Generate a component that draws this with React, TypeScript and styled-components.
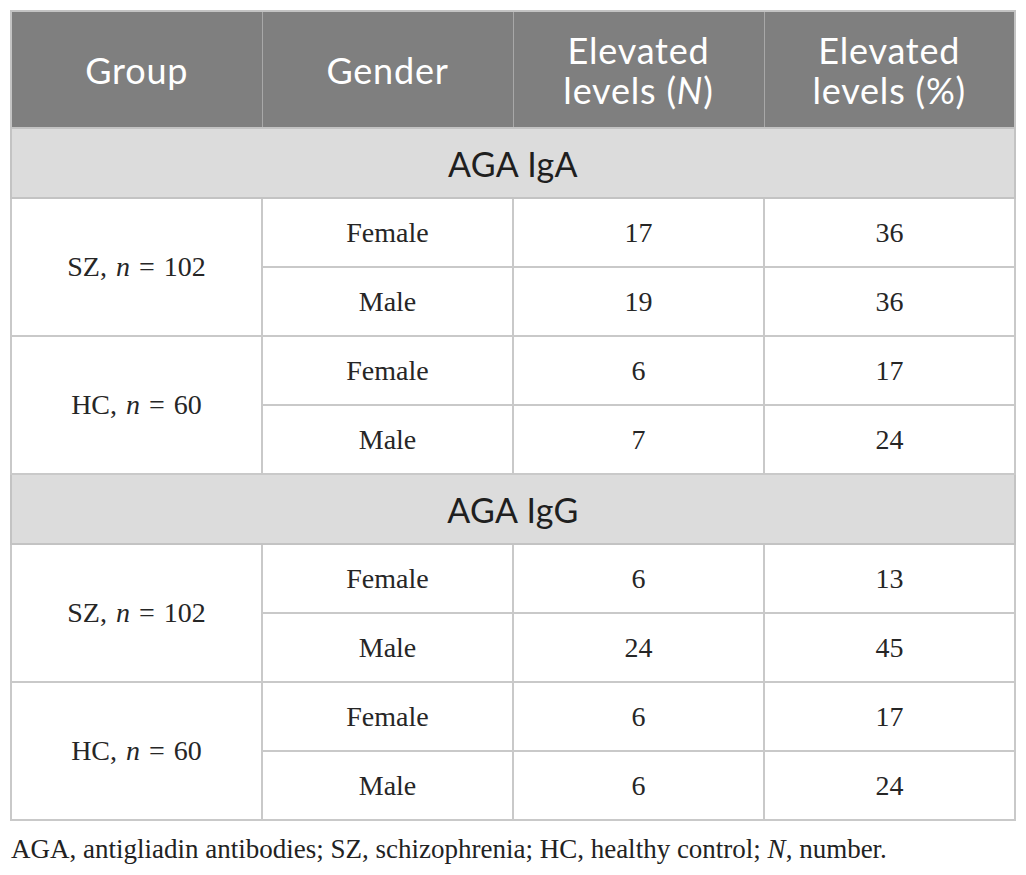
import styled, { createGlobalStyle } from 'styled-components';

const GlobalStyle = createGlobalStyle`
	html, body {
		margin: 0;
		padding: 0;
		background: #ffffff;
	}
`;

const Page = styled.div`
	padding: 10px 10px 0 10px;
	width: 1006px;
`;

const Table = styled.table`
	width: 1006px;
	border-collapse: collapse;
	table-layout: fixed;
	border: 2px solid #c3c3c3;
`;

const HeadCell = styled.th`
	height: 115px;
	padding: 0 4px;
	background: #7f7f7f;
	color: #ffffff;
	font-family: Lato, 'Open Sans', sans-serif;
	font-weight: 400;
	font-size: 36px;
	letter-spacing: 0.8px;
	line-height: 40px;
	text-align: center;
	vertical-align: middle;
	border-left: 1px solid #a8a8a8;
	&:first-child {
		border-left: none;
	}
`;

const SectionCell = styled.td`
	height: 66px;
	background: #dcdcdc;
	color: #1f1f1f;
	font-family: Lato, 'Open Sans', sans-serif;
	font-size: 34px;
	letter-spacing: 0.4px;
	text-align: center;
	vertical-align: middle;
	border-top: 2px solid #c3c3c3;
	border-bottom: 2px solid #c3c3c3;
`;

const Cell = styled.td`
	height: 67px;
	padding: 0;
	color: #262626;
	font-family: 'Liberation Serif', 'Times New Roman', serif;
	font-size: 28px;
	word-spacing: 2px;
	text-align: center;
	vertical-align: middle;
	border: 2px solid #c9c9c9;
`;

const Note = styled.p`
	margin: 13px 0 0 1px;
	color: #222222;
	font-family: 'Liberation Serif', 'Times New Roman', serif;
	font-size: 27px;
	white-space: nowrap;
`;

type Row = { group: string; n: string; rows: [string, string, string][] };

const sections: { title: string; groups: Row[] }[] = [
	{
		title: 'AGA IgA',
		groups: [
			{ group: 'SZ', n: '102', rows: [['Female', '17', '36'], ['Male', '19', '36']] },
			{ group: 'HC', n: '60', rows: [['Female', '6', '17'], ['Male', '7', '24']] },
		],
	},
	{
		title: 'AGA IgG',
		groups: [
			{ group: 'SZ', n: '102', rows: [['Female', '6', '13'], ['Male', '24', '45']] },
			{ group: 'HC', n: '60', rows: [['Female', '6', '17'], ['Male', '6', '24']] },
		],
	},
];

export default function App() {
	return (
		<Page>
			<GlobalStyle />
			<Table>
				<thead>
					<tr>
						<HeadCell>Group</HeadCell>
						<HeadCell>Gender</HeadCell>
						<HeadCell>
							Elevated
							<br />
							levels (<i>N</i>)
						</HeadCell>
						<HeadCell>
							Elevated
							<br />
							levels (%)
						</HeadCell>
					</tr>
				</thead>
				<tbody>
					{sections.map((s) => [
						<tr key={s.title}>
							<SectionCell colSpan={4}>{s.title}</SectionCell>
						</tr>,
						...s.groups.flatMap((g) =>
							g.rows.map((r, i) => (
								<tr key={s.title + g.group + r[0]}>
									{i === 0 && (
										<Cell rowSpan={2}>
											{g.group}, <i>n</i> = {g.n}
										</Cell>
									)}
									<Cell>{r[0]}</Cell>
									<Cell>{r[1]}</Cell>
									<Cell>{r[2]}</Cell>
								</tr>
							))
						),
					])}
				</tbody>
			</Table>
			<Note>
				AGA, antigliadin antibodies; SZ, schizophrenia; HC, healthy control; <i>N</i>, number.
			</Note>
		</Page>
	);
}
